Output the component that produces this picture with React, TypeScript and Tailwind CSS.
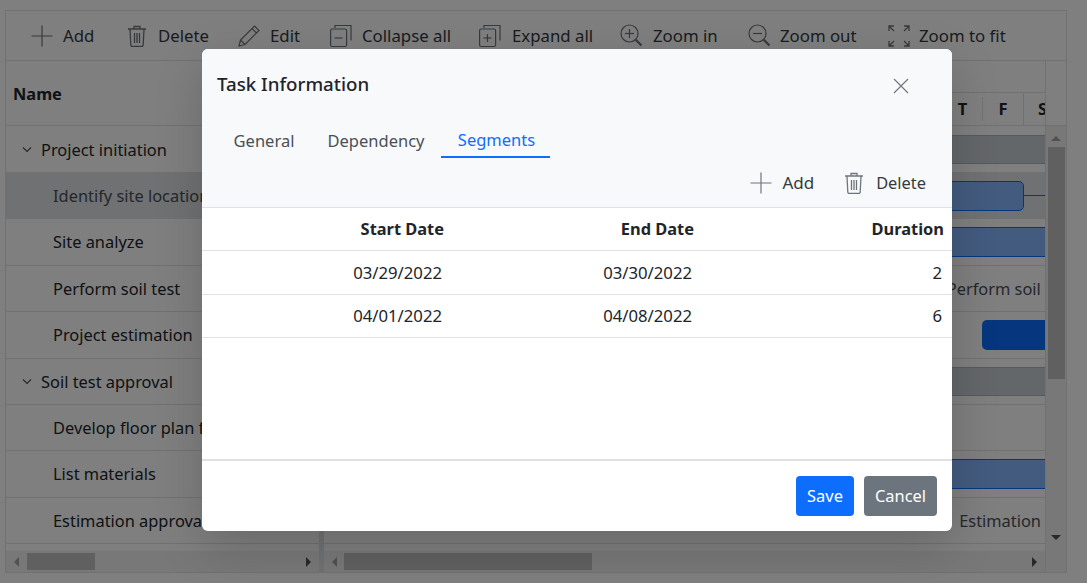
import React from 'react'

const Plus = () => (
  <svg width="22" height="22" viewBox="0 0 22 22" fill="none" stroke="currentColor" strokeWidth="1.2">
    <path d="M11 0.5v21M0.5 11h21" />
  </svg>
)

const Trash = () => (
  <svg width="20" height="22" viewBox="0 0 20 22" fill="none" stroke="currentColor" strokeWidth="1.3">
    <path d="M1 4h18M7 3.500V1.500h6v2M3 4.500l.8 15.500q.1 1.500 1.500 1.500h9.400q1.400 0 1.500-1.500L17 4.500" />
    <path d="M7.500 8v10M10 8v10M12.500 8v10" />
  </svg>
)

const Pencil = () => (
  <svg width="22" height="22" viewBox="0 0 22 22" fill="none" stroke="currentColor" strokeWidth="1.200">
    <path d="M1 21l1.500-6L16.500 1l4.500 4.500L7 19.500zM2.500 15L7 19.500M14 3.500l4.500 4.500" />
  </svg>
)

const Stack = ({ expand }: { expand?: boolean }) => (
  <svg width="22" height="24" viewBox="0 0 22 24" fill="none" stroke="currentColor" strokeWidth="1.200">
    <path d="M5 4V1.500h16v15" />
    <rect x="0.600" y="5" width="16" height="17.500" rx="1.500" />
    <path d="M4.500 14h8" />
    {expand && <path d="M8.500 10v8" />}
  </svg>
)

const Magnifier = ({ plus }: { plus?: boolean }) => (
  <svg width="23" height="23" viewBox="0 0 23 23" fill="none" stroke="currentColor" strokeWidth="1.200">
    <circle cx="9.500" cy="9.500" r="8.500" />
    <path d="M5 9.500h9" />
    {plus && <path d="M9.500 5v9" />}
    <path d="M15.500 15.500l6 6" strokeWidth="2.200" />
  </svg>
)

const Fit = () => (
  <svg width="22" height="22" viewBox="0 0 22 22" fill="none" stroke="currentColor" strokeWidth="1.300">
    <path d="M1 6V1h5M1 1l5 5M16 1h5v5M21 1l-5 5M1 16v5h5M1 21l5-5M16 21h5v-5M21 21l-5-5" />
  </svg>
)

const Chevron = () => (
  <svg width="10" height="6" viewBox="0 0 10 6" fill="none" stroke="#495057" strokeWidth="1.100">
    <path d="M1 .5l4 4 4-4" />
  </svg>
)

const Arrow = ({ d, dark }: { d: 'left' | 'right' | 'up' | 'down'; dark?: boolean }) => {
  const pts = {
    left: '5,0 5,10 0,5',
    right: '0,0 0,10 5,5',
    up: '0,5 10,5 5,0',
    down: '0,0 10,0 5,5'
  }[d]
  const horizontal = d === 'left' || d === 'right'
  return (
    <svg width={horizontal ? 5 : 10} height={horizontal ? 10 : 5} className="shrink-0">
      <polygon points={pts} fill={dark ? '#505050' : '#a3a3a3'} />
    </svg>
  )
}

const HScroll = ({
  thumb,
  rightArrow
}: {
  thumb: string
  rightArrow: string
}) => (
  <div className="flex h-[21px] shrink-0 items-center bg-[#f1f1f1]">
    <div className="ml-[8px]">
      <Arrow d="left" />
    </div>
    <div className={thumb} />
    <div className={rightArrow}>
      <Arrow d="right" dark />
    </div>
  </div>
)

const tasks = [
  { name: 'Project initiation', parent: true },
  { name: 'Identify site location', selected: true },
  { name: 'Site analyze' },
  { name: 'Perform soil test' },
  { name: 'Project estimation' },
  { name: 'Soil test approval', parent: true },
  { name: 'Develop floor plan for estimation' },
  { name: 'List materials' },
  { name: 'Estimation approval' }
]

const toolbar = [
  { icon: <Plus />, label: 'Add', cls: 'w-[96px] gap-[10px]' },
  { icon: <Trash />, label: 'Delete', cls: 'w-[111px] gap-[11px]' },
  { icon: <Pencil />, label: 'Edit', cls: 'w-[92px] gap-[10px]' },
  { icon: <Stack />, label: 'Collapse all', cls: 'w-[149px] gap-[10px]' },
  { icon: <Stack expand />, label: 'Expand all', cls: 'w-[141px] gap-[11px]' },
  { icon: <Magnifier plus />, label: 'Zoom in', cls: 'w-[128px] gap-[10px]' },
  { icon: <Magnifier />, label: 'Zoom out', cls: 'w-[140px] gap-[9px]' },
  { icon: <Fit />, label: 'Zoom to fit', cls: 'gap-[9px]' }
]

const TaskRows = () => (
  <>
    {tasks.map((t) => (
      <div
        key={t.name}
        className={`flex h-[46.4px] items-center overflow-hidden whitespace-nowrap border-b border-[#dee2e6] pt-px ${
          t.selected ? 'bg-[#dee2e6] text-[#495057]' : ''
        }`}
      >
        {t.parent ? (
          <>
            <span className="ml-[16px] mr-[9px] flex w-[10px]">
              <Chevron />
            </span>
            {t.name}
          </>
        ) : (
          <span className="ml-[47px]">{t.name}</span>
        )}
      </div>
    ))}
  </>
)

const ChartRow = ({ children, selected }: { children?: React.ReactNode; selected?: boolean }) => (
  <div
    className={`flex h-[46.4px] items-center justify-end overflow-hidden whitespace-nowrap border-b border-[#dee2e6] ${
      selected ? 'bg-[#dee2e6]' : ''
    }`}
  >
    {children}
  </div>
)

const Summary = () => <div className="h-[29px] w-full border-y border-[#adb5bd] bg-[#c9cfd4]" />
const Task = () => <div className="h-[30px] w-full border-y border-[#0d6efd] bg-[#86b6fe]" />

const ChartRows = () => (
  <>
    <ChartRow>
      <Summary />
    </ChartRow>
    <ChartRow selected>
      <div className="h-[30px] w-[300px] rounded-[5px] border border-[#0d6efd] bg-[#86b6fe]" />
      <div className="h-px w-[21px] bg-[#0d6efd]" />
    </ChartRow>
    <ChartRow>
      <Task />
    </ChartRow>
    <ChartRow>
      <span className="mr-[-29px] pt-px text-[#495057]">Perform soil test</span>
    </ChartRow>
    <ChartRow>
      <div className="h-[30px] w-[63px] rounded-l-[5px] bg-[#0d6efd]" />
    </ChartRow>
    <ChartRow>
      <Summary />
    </ChartRow>
    <ChartRow />
    <ChartRow>
      <Task />
    </ChartRow>
    <ChartRow>
      <span className="mr-[4px] pt-px text-[#495057]">Estimation</span>
    </ChartRow>
  </>
)

const Gantt = () => (
  <div className="ml-[5px] mt-[9px] flex h-[563px] w-[1062px] flex-col border border-[#dee2e6] text-[#212529]">
    <div className="flex h-[50px] shrink-0 items-center border-b border-[#dee2e6] pl-[25px] text-[16.800px] text-[#343a40]">
      {toolbar.map((b) => (
        <div key={b.label} className={`flex items-center whitespace-nowrap ${b.cls}`}>
          <span className="text-[#6c757d]">{b.icon}</span>
          {b.label}
        </div>
      ))}
    </div>
    <div className="flex min-h-0 flex-1">
      <div className="flex w-[313px] shrink-0 flex-col">
        <div className="flex h-[65px] shrink-0 items-center border-b border-[#dee2e6] pl-[7px] pt-[2px] font-bold">Name</div>
        <div className="min-h-0 flex-1 pt-[0.7px]">
          <TaskRows />
        </div>
        <HScroll thumb="ml-[8px] h-[17px] w-[68px] bg-[#c1c1c1]" rightArrow="ml-[211px]" />
      </div>
      <div className="w-[5px] shrink-0 bg-[#dee2e6]" />
      <div className="flex min-w-0 flex-1 flex-col">
        <div className="h-[65px] shrink-0 border-b border-[#dee2e6]">
          <div className="h-[32px] border-b border-[#dee2e6]" />
          <div className="flex h-[32px] items-center justify-end font-bold">
            <div className="w-[39px] text-center">T</div>
            <div className="w-[41px] border-l border-[#dee2e6] text-center">F</div>
            <div className="h-full w-[22px] overflow-hidden border-l border-[#dee2e6] pl-[14px] leading-[32px]">S</div>
          </div>
        </div>
        <div className="min-h-0 flex-1 pt-[0.7px]">
          <ChartRows />
        </div>
        <HScroll thumb="ml-[7px] h-[17px] w-[248px] bg-[#c1c1c1]" rightArrow="ml-[440px]" />
      </div>
      <div className="flex w-[21px] shrink-0 flex-col border-l border-[#dee2e6]">
        <div className="h-[65px] shrink-0 border-b border-[#dee2e6]" />
        <div className="flex flex-1 flex-col items-center bg-[#f1f1f1]">
          <div className="mt-[10px]">
            <Arrow d="up" />
          </div>
          <div className="mt-[6px] h-[232px] w-[17px] bg-[#c1c1c1]" />
          <div className="mt-[156px]">
            <Arrow d="down" dark />
          </div>
        </div>
      </div>
    </div>
  </div>
)

const segments = [
  { start: '03/29/2022', end: '03/30/2022', duration: 2 },
  { start: '04/01/2022', end: '04/08/2022', duration: 6 }
]

const Dialog = () => (
  <div className="absolute left-[202px] top-[49px] flex h-[482px] w-[750px] flex-col overflow-hidden rounded-[6px] bg-white text-[#212529] shadow-[0_16px_48px_rgba(0,0,0,0.175)]">
    <div className="h-[159px] shrink-0 border-b border-[#dee2e6] bg-[#f8f9fa]">
      <div className="flex h-[70px] items-center justify-between pl-[15px] pr-[43px]">
        <span className="text-[18.700px] font-medium">Task Information</span>
        <svg width="16" height="16" viewBox="0 0 16 16" stroke="#6c757d" strokeWidth="1.100" className="mt-[4px]">
          <path d="M1 1l14 14M15 1L1 15" />
        </svg>
      </div>
      <div className="ml-[15px] flex h-[39px] items-start text-[16.500px] text-[#495057]">
        <div className="flex h-[39px] w-[94px] items-center justify-center pt-[6px]">General</div>
        <div className="flex h-[39px] w-[130px] items-center justify-center pt-[6px]">Dependency</div>
        <div className="flex h-[39px] w-[109px] items-center justify-center border-b-2 border-[#0d6efd] pl-[2px] pt-[6px] text-[#0d6efd]">
          Segments
        </div>
      </div>
      <div className="mt-[5px] flex h-[40px] items-center justify-end pr-[26px] text-[#343a40]">
        <span className="mr-[10px] text-[#6c757d]">
          <Plus />
        </span>
        <span className="text-[17px]">Add</span>
        <span className="ml-[30px] mr-[12px] text-[#6c757d]">
          <Trash />
        </span>
        Delete
      </div>
    </div>
    <div className="flex min-h-0 flex-1 flex-col">
      <div className="grid h-[43px] shrink-0 grid-cols-3 items-center border-b border-[#dee2e6] font-bold">
        <div className="pr-[8px] text-right">Start Date</div>
        <div className="pr-[8px] text-right">End Date</div>
        <div className="pr-[8px] text-right">Duration</div>
      </div>
      {segments.map((s) => (
        <div
          key={s.start}
          className="grid h-[43.500px] shrink-0 grid-cols-3 items-center border-b border-[#dee2e6] text-[16.700px]"
        >
          <div className="pr-[10px] text-right">{s.start}</div>
          <div className="pr-[10px] text-right">{s.end}</div>
          <div className="pr-[10px] text-right">{s.duration}</div>
        </div>
      ))}
    </div>
    <div className="flex h-[72px] shrink-0 items-center justify-end gap-[10px] border-t-2 border-[#dee2e6] pr-[15px]">
      <button type="button" className="h-[40px] w-[58px] rounded-[4px] bg-[#0d6efd] text-white">
        Save
      </button>
      <button type="button" className="h-[40px] w-[73px] rounded-[4px] bg-[#6c757d] text-white">
        Cancel
      </button>
    </div>
  </div>
)

export default function App() {
  return (
    <div className="relative h-[583px] w-[1087px] overflow-hidden bg-white pt-px font-['Noto_Sans',sans-serif] text-[16.400px]">
      <Gantt />
      <div className="absolute inset-0 bg-black/50" />
      <Dialog />
    </div>
  )
}
